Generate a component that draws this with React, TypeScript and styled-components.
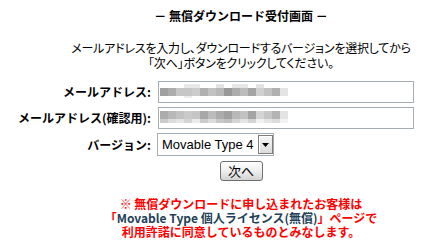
import React from 'react'
import styled, { createGlobalStyle } from 'styled-components'

const GlobalStyle = createGlobalStyle`
  html, body {
    margin: 0;
    padding: 0;
    background: #fff;
  }
  body {
    font-family: 'Noto Sans CJK JP', 'Liberation Sans', sans-serif;
    font-size: 12px;
    color: #000;
  }
`

const Page = styled.div`
  width: 448px;
  height: 248px;
  box-sizing: border-box;
  padding-top: 9px;
  display: flex;
  flex-direction: column;
`

const Heading = styled.h1`
  margin: 0;
  padding-left: 34px;
  text-align: center;
  font-size: 12px;
  font-weight: 700;
  line-height: 14px;
`

const Lead = styled.p`
  margin: 17px 0 0;
  padding-left: 34px;
  text-align: center;
  line-height: 15px;
  letter-spacing: -0.2px;
  font-feature-settings: 'palt';
`

const Form = styled.div`
  margin-top: 11px;
  display: grid;
  grid-template-columns: 152px 256px;
  column-gap: 6px;
  row-gap: 4px;
  align-items: center;
`

const Label = styled.label`
  padding-right: 1px;
  text-align: right;
  font-weight: 700;
  line-height: 14px;
  white-space: nowrap;
`

const TextBox = styled.div`
  box-sizing: border-box;
  height: 22px;
  border: 1px solid #a5acb2;
  padding: 2px 1px 0;
  line-height: 0;
`

const SelectFrame = styled.div`
  box-sizing: border-box;
  width: 117px;
  height: 23px;
  margin-left: -1px;
  border: 1px solid #a5acb2;
  padding: 1px 0;
  display: flex;
`

const SelectControl = styled.select`
  appearance: none;
  flex: 1;
  min-width: 0;
  margin: 0;
  border: 0;
  padding: 0 0 0 4px;
  background: transparent;
  color: #000;
  font: 13px 'Liberation Sans', Arial, sans-serif;
  outline: none;
`

const DropButton = styled.span`
  box-sizing: border-box;
  width: 15px;
  border: 1px solid #7d7d7d;
  box-shadow: inset 1px 1px 0 #fff;
  background: linear-gradient(#f6f6f6, #dcdcdc);
  display: flex;
  align-items: center;
  justify-content: center;
`

const ButtonRow = styled.div`
  margin-top: 5px;
  padding-left: 34px;
  display: flex;
  justify-content: center;
`

const NextButton = styled.button`
  width: 43px;
  height: 20px;
  padding: 0;
  border: 1px solid #6f6f6f;
  border-radius: 3px;
  background: linear-gradient(#ffffff, #ececec 55%, #d2d2d2);
  color: #000;
  font: 13px 'Noto Sans CJK JP', sans-serif;
  line-height: 16px;
`

const Notice = styled.p`
  margin: 16px 0 0;
  padding-left: 34px;
  text-align: center;
  color: #ff0000;
  font-weight: 700;
  line-height: 14px;
`

const Product = styled.span`
  color: #243f58;
`

type MosaicRow = { h: number; cells: (string | null)[] }

// privacy blur over the address, drawn as 8px gray cells
const Mosaic = ({ rows }: { rows: MosaicRow[] }) => {
  let y = 0
  const height = rows.reduce((s, r) => s + r.h, 0)
  return (
    <svg width={128} height={height} shapeRendering="crispEdges">
      {rows.map((r, i) => {
        const top = y
        y += r.h
        return r.cells.map((c, j) =>
          c ? <rect key={`${i}-${j}`} x={j * 8} y={top} width={8} height={r.h} fill={`#${c}${c}${c}`} /> : null
        )
      })}
    </svg>
  )
}

const _ = null
const mailRows: MosaicRow[] = [
  { h: 4, cells: [_, _, _, 'e8', 'e8', _, _, 'e2', _, 'e6', 'e6', _, 'e2', _, _, _] },
  { h: 8, cells: ['a0', 'ac', 'c6', 'c6', 'cc', 'b0', 'c2', 'b8', '98', 'ac', 'bc', 'a4', 'd0', 'c2', 'b0', 'e4'] },
  { h: 2, cells: [_, _, _, 'ec', _, _, _, _, _, _, _, _, _, _, _, _] },
]
const confirmRows: MosaicRow[] = [
  { h: 1, cells: [] },
  { h: 8, cells: ['ac', 'b8', 'c2', 'ca', 'c6', 'a8', 'bc', 'ac', 'a0', 'b8', 'c2', 'a4', 'd4', 'c6', 'b4', 'e4'] },
  { h: 4, cells: ['cc', 'dc', 'e4', 'd4', 'ec', 'cc', 'dc', 'c8', 'c0', 'd4', 'e4', 'd4', 'f0', 'e4', 'dc', 'f2'] },
]

export default function App() {
  return (
    <>
      <GlobalStyle />
      <Page>
        <Heading>－ 無償ダウンロード受付画面 －</Heading>
        <Lead>
          メールアドレスを入力し、ダウンロードするバージョンを選択してから
          <br />
          「次へ」ボタンをクリックしてください。
        </Lead>
        <Form>
          <Label>メールアドレス:</Label>
          <TextBox>
            <Mosaic rows={mailRows} />
          </TextBox>
          <Label>メールアドレス(確認用):</Label>
          <TextBox>
            <Mosaic rows={confirmRows} />
          </TextBox>
          <Label>バージョン:</Label>
          <SelectFrame>
            <SelectControl defaultValue="mt4">
              <option value="mt4">Movable Type 4</option>
            </SelectControl>
            <DropButton>
              <svg width="7" height="4" viewBox="0 0 7 4">
                <path d="M0 0h7L3.5 4z" fill="#000" />
              </svg>
            </DropButton>
          </SelectFrame>
        </Form>
        <ButtonRow>
          <NextButton type="button">次へ</NextButton>
        </ButtonRow>
        <Notice>
          ※ 無償ダウンロードに申し込まれたお客様は
          <br />
          「<Product>Movable Type 個人ライセンス(無償)</Product>」ページで
          <br />
          利用許諾に同意しているものとみなします。
        </Notice>
      </Page>
    </>
  )
}
